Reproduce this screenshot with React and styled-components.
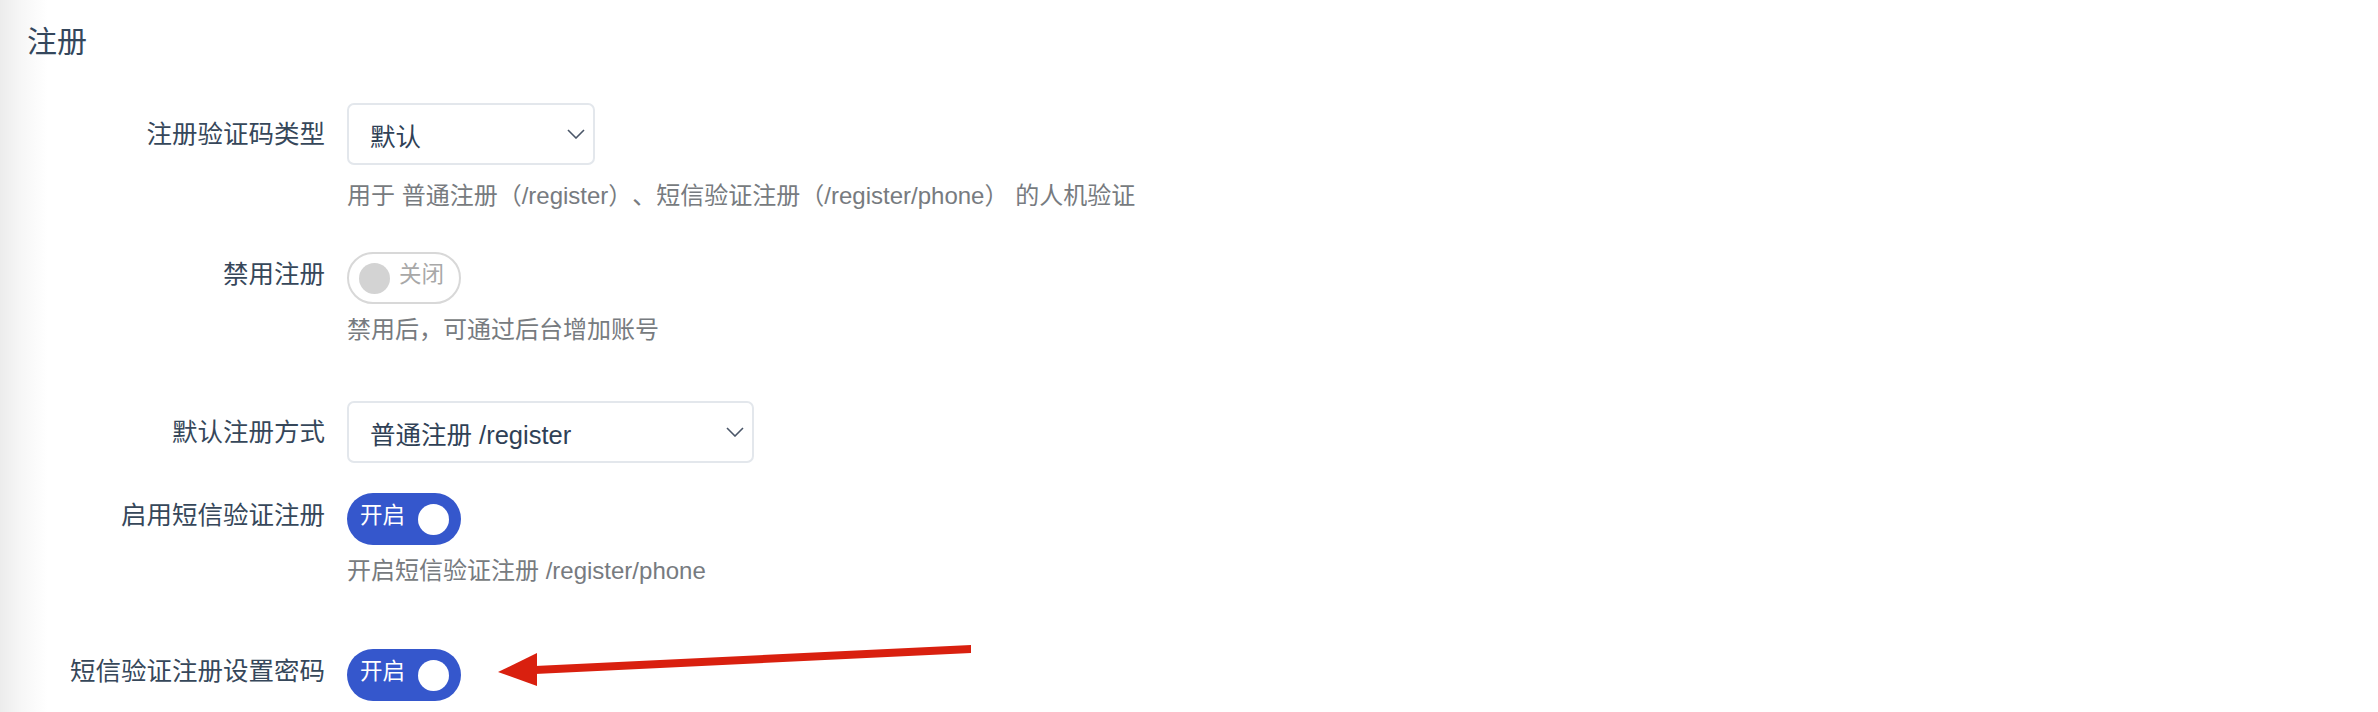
import React from 'react';
import styled, {createGlobalStyle} from 'styled-components';

const GlobalStyle = createGlobalStyle`
  html, body {
    margin: 0;
    padding: 0;
  }
  body {
    background: linear-gradient(to right, #ececec 0, #f7f7f7 22px, #ffffff 48px);
    font-family: "Liberation Sans", "Noto Sans CJK SC", sans-serif;
    text-spacing-trim: space-all;
  }
`

const Page = styled.div`
  position: relative;
  width: 2378px;
  height: 712px;
  overflow: hidden;
  padding: 22px 0 0 27px;
  box-sizing: border-box;
`

const Title = styled.h2`
  margin: 0 0 41px;
  font-size: 30px;
  line-height: 40px;
  font-weight: 400;
  color: #34475c;
`

const FormItem = styled.div`
  display: grid;
  grid-template-columns: 298px auto;
  column-gap: 22px;
  align-items: start;
  margin-bottom: ${p => p.$gap || 0}px;
`

const Label = styled.label`
  text-align: right;
  font-size: 25.5px;
  line-height: ${p => p.$h}px;
  color: #36475a;
  white-space: nowrap;
`

const Control = styled.div`
  display: flex;
  flex-direction: column;
  align-items: flex-start;
`

const Select = styled.div`
  box-sizing: border-box;
  width: ${p => p.$w}px;
  height: 62px;
  display: flex;
  align-items: center;
  justify-content: space-between;
  padding: 0 8px 0 21px;
  border: 2px solid #e3e7ec;
  border-radius: 7px;
  background: #fff;
  font-size: 25.5px;
  color: #2f4156;
`

const Help = styled.div`
  margin-top: ${p => p.$mt}px;
  font-size: 24px;
  line-height: 36px;
  color: #777b80;
  white-space: nowrap;
`

const Switch = styled.div`
  box-sizing: border-box;
  width: 114px;
  height: 52px;
  border-radius: 26px;
  display: flex;
  align-items: center;
  flex-direction: ${p => (p.$on ? 'row' : 'row-reverse')};
  justify-content: space-between;
  padding: ${p => (p.$on ? '0 12px 0 13px' : '0 15px 0 10px')};
  background: ${p => (p.$on ? '#3557cc' : '#fff')};
  border: ${p => (p.$on ? 'none' : '2px solid #d8d8d8')};
  font-size: 22.5px;
  color: ${p => (p.$on ? '#fff' : '#a8a8a8')};
`

const SwitchText = styled.span`
  line-height: 1;
  margin-bottom: 5px;
`

const Knob = styled.span`
  width: 31px;
  height: 31px;
  border-radius: 50%;
  background: ${p => (p.$on ? '#fff' : '#d3d3d3')};
`

const Arrow = styled.svg`
  position: absolute;
  left: 490px;
  top: 640px;
  pointer-events: none;
`

const Chevron = () => (
  <svg width="18" height="10" viewBox="0 0 18 10">
    <polyline points="1,1 9,9 17,1" fill="none" stroke="#4a5668" strokeWidth="1.6" />
  </svg>
)

const Toggle = ({on}) => (
  <Switch $on={on}>
    <SwitchText>{on ? '开启' : '关闭'}</SwitchText>
    <Knob $on={on} />
  </Switch>
)

const App = () => {
  return (
    <Page>
      <GlobalStyle />
      <Title>注册</Title>

      <FormItem $gap={38}>
        <Label $h={62}>注册验证码类型</Label>
        <Control>
          <Select $w={248}>
            <span>默认</span>
            <Chevron />
          </Select>
          <Help $mt={13}>用于 普通注册（/register）、短信验证注册（/register/phone） 的人机验证</Help>
        </Control>
      </FormItem>

      <FormItem $gap={53}>
        <Label $h={45}>禁用注册</Label>
        <Control>
          <Toggle on={false} />
          <Help $mt={8}>禁用后，可通过后台增加账号</Help>
        </Control>
      </FormItem>

      <FormItem $gap={30}>
        <Label $h={62}>默认注册方式</Label>
        <Control>
          <Select $w={407}>
            <span>普通注册 /register</span>
            <Chevron />
          </Select>
        </Control>
      </FormItem>

      <FormItem $gap={60}>
        <Label $h={45}>启用短信验证注册</Label>
        <Control>
          <Toggle on />
          <Help $mt={8}>开启短信验证注册 /register/phone</Help>
        </Control>
      </FormItem>

      <FormItem>
        <Label $h={45}>短信验证注册设置密码</Label>
        <Control>
          <Toggle on />
        </Control>
      </FormItem>

      <Arrow width="490" height="55" viewBox="0 0 490 55">
        <polygon points="45,26 481,5 481,13 45,34" fill="#d9200f" />
        <polygon points="8,32 47,13 47,46" fill="#d9200f" />
      </Arrow>
    </Page>
  )
}

export default App
